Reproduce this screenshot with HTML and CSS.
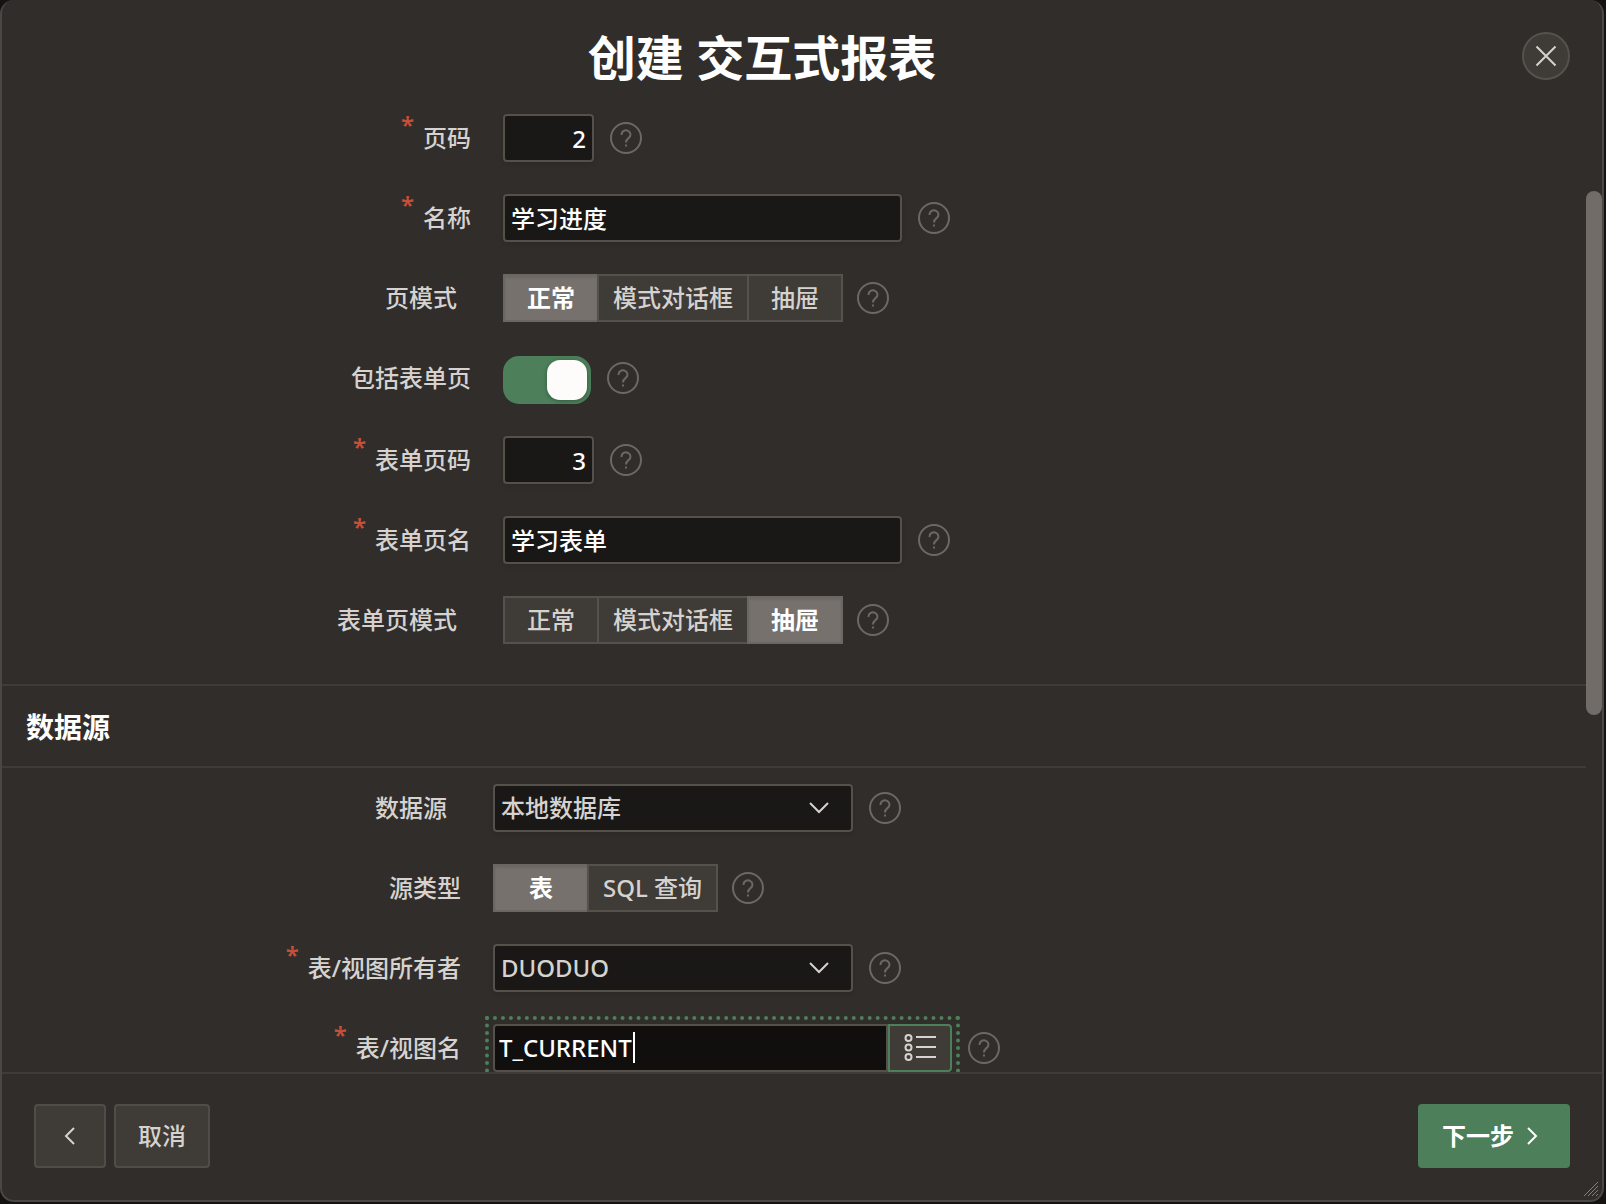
FILE: index.html
```html
<!DOCTYPE html>
<html lang="zh-CN">
<head>
<meta charset="utf-8">
<meta name="viewport" content="width=device-width, initial-scale=1">
<title>创建 交互式报表</title>
<link rel="stylesheet" href="styles.css">
</head>
<body>
<svg class="sprite" aria-hidden="true">
  <symbol id="icon-help" viewBox="0 0 32 32">
    <circle cx="16" cy="16" r="15"/>
    <path d="M11.5 13V12.500a4.500 4.200 0 1 1 7.200 3.400C17 17.200 16 17.800 16 20.500M16 22.500v2"/>
  </symbol>
  <symbol id="icon-down" viewBox="0 0 20 12">
    <path d="M1 1l9 9 9-9"/>
  </symbol>
</svg>
<main class="dialog" role="dialog" aria-labelledby="dialog-title">
  <header class="dialog-header">
    <h1 class="dialog-title" id="dialog-title">创建 交互式报表</h1>
    <button class="close" type="button" aria-label="关闭">
      <svg class="close-icon" viewBox="0 0 22 22" aria-hidden="true"><path d="M1.500 1.500l19 19M20.500 1.500l-19 19"/></svg>
    </button>
  </header>

  <div class="dialog-body">
    <div class="content">
      <section class="form form-page">
        <div class="row">
          <label class="label required" for="page-no">页码</label>
          <div class="field">
            <input class="input input-number" id="page-no" type="text" inputmode="numeric" value="2" required>
            <button class="help" type="button" aria-label="帮助"><svg class="help-icon"><use href="#icon-help"/></svg></button>
          </div>
        </div>
        <div class="row">
          <label class="label required" for="page-name">名称</label>
          <div class="field">
            <input class="input input-text" id="page-name" type="text" value="学习进度" required>
            <button class="help" type="button" aria-label="帮助"><svg class="help-icon"><use href="#icon-help"/></svg></button>
          </div>
        </div>
        <div class="row">
          <span class="label label-inset" id="page-mode">页模式</span>
          <div class="field field-pills">
            <div class="pills" role="radiogroup" aria-labelledby="page-mode">
              <label class="pill"><input class="pill-input" type="radio" name="page-mode" checked><span class="pill-text">正常</span></label>
              <label class="pill"><input class="pill-input" type="radio" name="page-mode"><span class="pill-text">模式对话框</span></label>
              <label class="pill"><input class="pill-input" type="radio" name="page-mode"><span class="pill-text">抽屉</span></label>
            </div>
            <button class="help" type="button" aria-label="帮助"><svg class="help-icon"><use href="#icon-help"/></svg></button>
          </div>
        </div>
        <div class="row">
          <label class="label" for="include-form">包括表单页</label>
          <div class="field">
            <input class="switch" id="include-form" type="checkbox" role="switch" checked>
            <button class="help" type="button" aria-label="帮助"><svg class="help-icon"><use href="#icon-help"/></svg></button>
          </div>
        </div>
        <div class="row">
          <label class="label required" for="form-no">表单页码</label>
          <div class="field">
            <input class="input input-number" id="form-no" type="text" inputmode="numeric" value="3" required>
            <button class="help" type="button" aria-label="帮助"><svg class="help-icon"><use href="#icon-help"/></svg></button>
          </div>
        </div>
        <div class="row">
          <label class="label required" for="form-name">表单页名</label>
          <div class="field">
            <input class="input input-text" id="form-name" type="text" value="学习表单" required>
            <button class="help" type="button" aria-label="帮助"><svg class="help-icon"><use href="#icon-help"/></svg></button>
          </div>
        </div>
        <div class="row">
          <span class="label label-inset" id="form-mode">表单页模式</span>
          <div class="field field-pills">
            <div class="pills" role="radiogroup" aria-labelledby="form-mode">
              <label class="pill"><input class="pill-input" type="radio" name="form-mode"><span class="pill-text">正常</span></label>
              <label class="pill"><input class="pill-input" type="radio" name="form-mode"><span class="pill-text">模式对话框</span></label>
              <label class="pill"><input class="pill-input" type="radio" name="form-mode" checked><span class="pill-text">抽屉</span></label>
            </div>
            <button class="help" type="button" aria-label="帮助"><svg class="help-icon"><use href="#icon-help"/></svg></button>
          </div>
        </div>
      </section>

      <h2 class="section-title">数据源</h2>

      <section class="form form-source">
        <div class="row">
          <label class="label label-inset" for="source">数据源</label>
          <div class="field">
            <div class="select-wrap">
              <select class="input select" id="source"><option>本地数据库</option></select>
              <svg class="chevron" aria-hidden="true"><use href="#icon-down"/></svg>
            </div>
            <button class="help" type="button" aria-label="帮助"><svg class="help-icon"><use href="#icon-help"/></svg></button>
          </div>
        </div>
        <div class="row">
          <span class="label" id="source-type">源类型</span>
          <div class="field field-pills">
            <div class="pills" role="radiogroup" aria-labelledby="source-type">
              <label class="pill"><input class="pill-input" type="radio" name="source-type" checked><span class="pill-text">表</span></label>
              <label class="pill"><input class="pill-input" type="radio" name="source-type"><span class="pill-text">SQL 查询</span></label>
            </div>
            <button class="help" type="button" aria-label="帮助"><svg class="help-icon"><use href="#icon-help"/></svg></button>
          </div>
        </div>
        <div class="row">
          <label class="label required" for="owner">表/视图所有者</label>
          <div class="field">
            <div class="select-wrap">
              <select class="input select" id="owner"><option>DUODUO</option></select>
              <svg class="chevron" aria-hidden="true"><use href="#icon-down"/></svg>
            </div>
            <button class="help" type="button" aria-label="帮助"><svg class="help-icon"><use href="#icon-help"/></svg></button>
          </div>
        </div>
        <div class="row">
          <label class="label required" for="table-name">表/视图名</label>
          <div class="field">
            <div class="lov">
              <input class="input lov-input" id="table-name" type="text" value="T_CURRENT" required>
              <span class="caret"></span>
              <button class="lov-button" type="button" aria-label="选择表">
                <svg class="lov-icon" viewBox="0 0 32 32" aria-hidden="true">
                  <circle cx="4.500" cy="6" r="3"/><circle cx="4.500" cy="15.500" r="3"/><circle cx="4.500" cy="25" r="3"/>
                  <path d="M12 5h20M12 15h20M12 25h20"/>
                </svg>
              </button>
            </div>
            <button class="help" type="button" aria-label="帮助"><svg class="help-icon"><use href="#icon-help"/></svg></button>
          </div>
        </div>
      </section>
    </div>
    <div class="scroll-track"><div class="scroll-thumb"></div></div>
  </div>

  <footer class="dialog-footer">
    <button class="button button-back" type="button" aria-label="上一步">
      <svg class="arrow" viewBox="0 0 12 20" aria-hidden="true"><path d="M10 2L2 10l8 8"/></svg>
    </button>
    <button class="button" type="button">取消</button>
    <button class="button button-next" type="button">下一步
      <svg class="arrow" viewBox="0 0 12 20" aria-hidden="true"><path d="M2 2l8 8-8 8"/></svg>
    </button>
  </footer>
  <svg class="resize" viewBox="0 0 16 16" aria-hidden="true"><path d="M1 15L15 1M5 15L15 5M9 15l6-6M13 15l2-2"/></svg>
</main>
</body>
</html>
```
FILE: styles.css
```css
* {
  box-sizing: border-box;
}

body {
  margin: 0;
  padding: 0 2px 2px 0;
  background: #151312;
  color: #d5d2cf;
  font: 500 24px/32px "Noto Sans", "Noto Sans CJK SC", sans-serif;
}

button,
input,
select {
  font: inherit;
  color: inherit;
}

svg {
  display: block;
  fill: none;
  stroke: currentColor;
  stroke-width: 2;
}

.sprite {
  position: absolute;
  width: 0;
  height: 0;
}

.dialog {
  position: relative;
  display: flex;
  flex-direction: column;
  height: calc(100vh - 2px);
  overflow: hidden;
  background: #312d2a;
  border: solid #4b4744;
  border-width: 0 2px 2px;
  border-radius: 14px;
}

/* Header */

.dialog-header {
  display: flex;
  flex: none;
  align-items: center;
  gap: 32px;
  height: 112px;
  padding: 0 32px;
}

.dialog-title {
  flex: 1;
  margin: 0;
  padding-top: 4px;
  color: #fff;
  font-size: 48px;
  font-weight: 700;
  line-height: 64px;
  text-align: center;
}

.close {
  display: grid;
  place-items: center;
  width: 48px;
  height: 48px;
  padding: 0;
  background: #3f3b36;
  border: 2px solid #55514c;
  border-radius: 50%;
}

.close-icon {
  width: 22px;
  height: 22px;
}

/* Body */

.dialog-body {
  display: flex;
  flex: 1;
  min-height: 0;
  overflow: hidden;
}

.content {
  flex: 1;
  min-width: 0;
}

.scroll-track {
  flex: none;
  width: 16px;
  padding-top: 79px;
}

.scroll-thumb {
  height: 524px;
  background: #716c68;
  border-radius: 8px;
}

.form {
  display: grid;
  gap: 32px;
}

.form-page {
  --label-width: 469px;
  padding: 2px 0 40px;
}

.form-source {
  --label-width: 459px;
  padding: 16px 0 32px;
}

.section-title {
  margin: 0;
  padding: 25px 24px 23px;
  border: solid #3f3b38;
  border-width: 2px 0;
  color: #fff;
  font-size: 28px;
  line-height: 32px;
}

.row {
  display: grid;
  grid-template-columns: var(--label-width) 1fr;
  gap: 32px;
}

.label {
  display: flex;
  justify-content: flex-end;
  height: 48px;
  line-height: 48px;
}

.label-inset {
  padding-right: 14px;
}

.required::before {
  content: "*";
  margin-right: 9px;
  color: #c74e38;
  font-weight: 600;
  line-height: 22px;
}

.field {
  display: flex;
  align-items: flex-start;
  gap: 16px;
}

.field-pills {
  gap: 14px;
}

.help {
  width: 32px;
  height: 32px;
  margin: 8px 0;
  padding: 0;
  background: none;
  border: 0;
  color: #6d6864;
}

.help-icon {
  width: 32px;
  height: 32px;
}

/* Inputs */

.input {
  height: 48px;
  padding: 0 6px;
  background: #1a1816;
  border: 2px solid #56504b;
  border-radius: 4px;
  box-shadow: 0 2px 4px rgba(0, 0, 0, 0.1);
  color: #fff;
  outline: 0;
}

.input-number {
  width: 91px;
  text-align: right;
}

.input-text {
  width: 399px;
  padding-bottom: 2px;
}

.select-wrap {
  display: grid;
  width: 360px;
}

.select {
  grid-area: 1 / 1;
  appearance: none;
  color: #d5d2cf;
}

.chevron {
  grid-area: 1 / 1;
  place-self: center end;
  width: 20px;
  height: 12px;
  margin-right: 24px;
  pointer-events: none;
}

.switch {
  appearance: none;
  width: 88px;
  height: 48px;
  margin: 2px 0 0;
  padding: 4px;
  background: #4c7f5a;
  border-radius: 16px;
}

.switch::before {
  content: "";
  display: block;
  width: 40px;
  height: 40px;
  background: #fdfcfb;
  border-radius: 13px;
  box-shadow: 0 1px 4px rgba(0, 0, 0, 0.3);
}

.switch:checked::before {
  margin-left: auto;
}

.pills {
  display: flex;
}

.pill {
  display: grid;
  position: relative;
}

.pill + .pill {
  margin-left: -2px;
}

.pill-input {
  position: absolute;
  opacity: 0;
}

.pill-text {
  min-width: 96px;
  padding: 0 14px;
  background: #3f3b36;
  border: 2px solid #55514c;
  line-height: 44px;
  text-align: center;
}

.pill-input:checked + .pill-text {
  position: relative;
  background: #76716c;
  border-color: #6b6661;
  box-shadow: inset 0 2px 2px rgba(0, 0, 0, 0.08);
  color: #fff;
  font-weight: 700;
}

.lov {
  display: flex;
  position: relative;
  width: 459px;
  outline: 4px dotted #4c7f5a;
  outline-offset: 4px;
}

.lov-input {
  flex: 1;
  min-width: 0;
  padding: 0 4px 2px;
  background: #100f0d;
  border-radius: 4px 0 0 4px;
}

.caret {
  position: absolute;
  top: 8px;
  left: 140px;
  width: 2px;
  height: 31px;
  background: #fff;
}

.lov-button {
  display: grid;
  place-items: center;
  width: 64px;
  height: 48px;
  padding: 0;
  background: #3f3b36;
  border: 2px solid #4c7f5a;
  border-radius: 0 4px 4px 0;
}

.lov-icon {
  width: 32px;
  height: 32px;
}

/* Footer */

.dialog-footer {
  display: flex;
  flex: none;
  gap: 8px;
  padding: 30px 32px 32px;
  border-top: 2px solid #3f3b38;
}

.button {
  display: flex;
  align-items: center;
  justify-content: center;
  height: 64px;
  padding: 0 22px;
  background: #3f3b36;
  border: 2px solid #504c48;
  border-radius: 4px;
}

.button-back {
  width: 72px;
}

.button-next {
  gap: 12px;
  width: 152px;
  margin-left: auto;
  padding: 0 30px 0 22px;
  background: #4c7f5a;
  border-color: #4c7f5a;
  color: #fff;
  font-weight: 700;
}

.arrow {
  width: 12px;
  height: 20px;
}

.resize {
  position: absolute;
  right: 3px;
  bottom: 3px;
  width: 16px;
  height: 16px;
  color: #85817d;
  stroke-width: 1;
}
```
